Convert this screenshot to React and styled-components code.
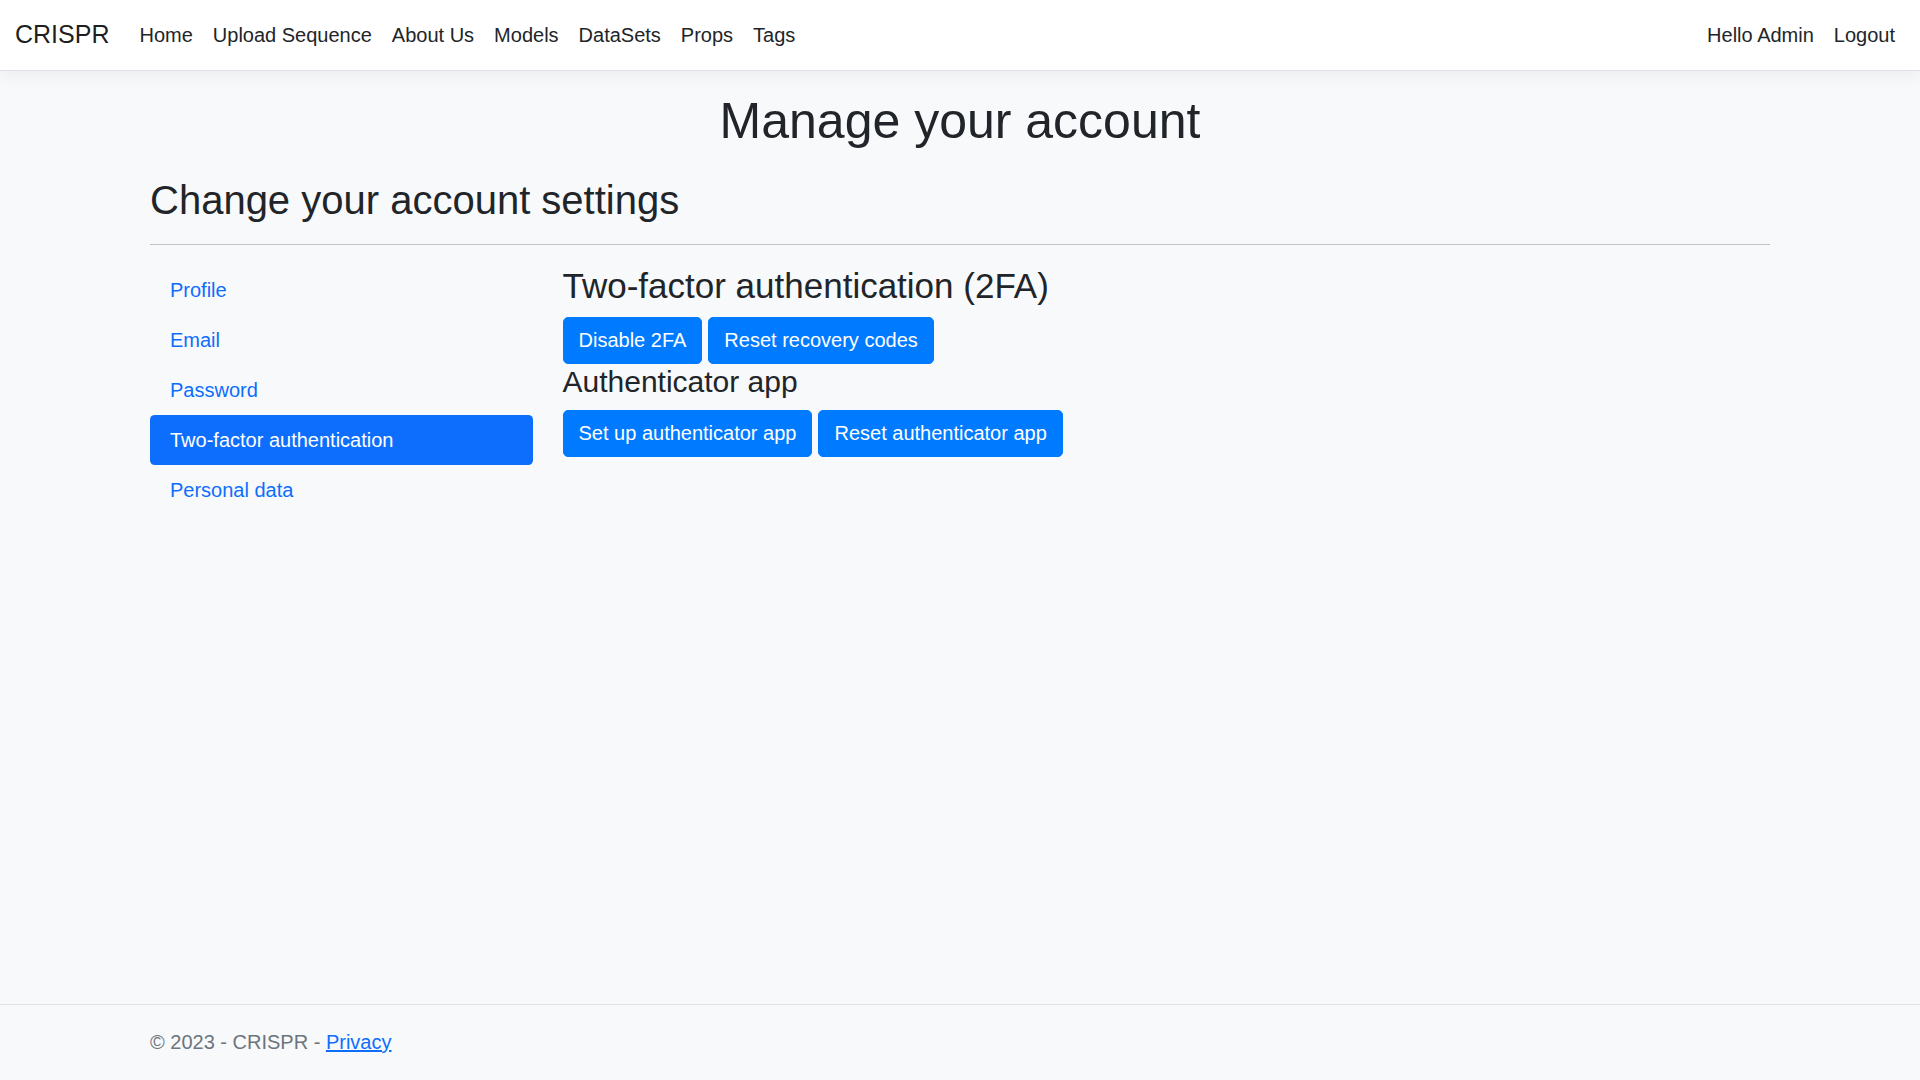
import React from 'react';
import styled, { createGlobalStyle } from 'styled-components';

const GlobalStyle = createGlobalStyle`
    *, *::before, *::after {
        box-sizing: border-box;
    }

    html, body {
        margin: 0;
        padding: 0;
    }

    body {
        font-family: "Liberation Sans", Arial, sans-serif;
        font-size: 20px;
        line-height: 1.5;
        color: #212529;
        background: #f8f9fa;
    }
`;

const Page = styled.div`
    min-height: 100vh;
    display: flex;
    flex-direction: column;
`;

const Navbar = styled.header`
    background: #fff;
    border-bottom: 1px solid #dee2e6;
    box-shadow: 0 5px 15px rgba(0, 0, 0, 0.05);
    margin-bottom: 20px;
`;

const NavInner = styled.nav`
    display: flex;
    align-items: center;
    padding: 10px 15px;
`;

const Brand = styled.a`
    font-size: 25px;
    line-height: 37.5px;
    padding: 6.25px 0;
    margin-right: 20px;
    color: rgba(0, 0, 0, 0.9);
    text-decoration: none;
    white-space: nowrap;
`;

const NavList = styled.ul`
    list-style: none;
    margin: 0;
    padding: 0;
    display: flex;
    flex-grow: ${(p) => (p.$grow ? 1 : 0)};
`;

const NavLink = styled.a`
    display: block;
    padding: 10px;
    line-height: 30px;
    color: #212529;
    text-decoration: none;
    white-space: nowrap;
`;

const Main = styled.main`
    flex: 1;
    width: 100%;
    max-width: 1650px;
    margin: 0 auto;
    padding: 0 15px 20px;
`;

const Title = styled.h1`
    font-size: 50px;
    font-weight: 500;
    line-height: 1.2;
    text-align: center;
    margin: 0 0 24.5px;
`;

const Subtitle = styled.h2`
    font-size: 40px;
    font-weight: 500;
    line-height: 1.2;
    margin: 0 0 10px;
`;

const Rule = styled.hr`
    margin: 20px 0;
    border: 0;
    border-top: 1px solid #212529;
    opacity: 0.25;
`;

const Row = styled.div`
    display: flex;
    margin: 0 -15px;
`;

const Col = styled.div`
    flex: 0 0 ${(p) => p.$span / 12 * 100}%;
    max-width: ${(p) => p.$span / 12 * 100}%;
    padding: 0 15px;
`;

const Pills = styled.ul`
    list-style: none;
    margin: 0;
    padding: 0;
    display: flex;
    flex-direction: column;
`;

const Pill = styled.a`
    display: block;
    padding: 10px 20px;
    line-height: 30px;
    border-radius: 4.6875px;
    text-decoration: none;
    color: ${(p) => (p.$active ? '#fff' : '#0d6efd')};
    background: ${(p) => (p.$active ? '#0d6efd' : 'transparent')};
`;

const SectionTitle = styled.h3`
    font-size: 35px;
    font-weight: 500;
    line-height: 1.2;
    margin: 0 0 10px;
`;

const SubSection = styled.h4`
    font-size: 30px;
    font-weight: 500;
    line-height: 1.2;
    margin: 0 0 10px;
`;

const ButtonRow = styled.div`
    display: flex;
    gap: 6px;
`;

const Button = styled.a`
    display: inline-block;
    padding: 7.5px 15px;
    line-height: 30px;
    font-size: 20px;
    color: #fff;
    background: #007bff;
    border: 1.25px solid #007bff;
    border-radius: 5px;
    text-decoration: none;
    white-space: nowrap;
`;

const Footer = styled.footer`
    border-top: 1px solid #dee2e6;
    color: #6c757d;
    line-height: 75px;
    white-space: nowrap;
`;

const FooterInner = styled.div`
    max-width: 1650px;
    margin: 0 auto;
    padding: 0 15px;

    a {
        color: #0d6efd;
        text-decoration: underline;
    }
`;

const mainLinks = ['Home', 'Upload Sequence', 'About Us', 'Models', 'DataSets', 'Props', 'Tags'];
const manageLinks = ['Profile', 'Email', 'Password', 'Two-factor authentication', 'Personal data'];

export default function App() {
    return (
        <Page>
            <GlobalStyle />
            <Navbar>
                <NavInner>
                    <Brand href="#">CRISPR</Brand>
                    <NavList $grow>
                        {mainLinks.map((link) => (
                            <li key={link}>
                                <NavLink href="#">{link}</NavLink>
                            </li>
                        ))}
                    </NavList>
                    <NavList>
                        <li><NavLink href="#">Hello Admin</NavLink></li>
                        <li><NavLink href="#">Logout</NavLink></li>
                    </NavList>
                </NavInner>
            </Navbar>

            <Main>
                <Title>Manage your account</Title>
                <Subtitle>Change your account settings</Subtitle>
                <Rule />
                <Row>
                    <Col $span={3}>
                        <Pills>
                            {manageLinks.map((link) => (
                                <li key={link}>
                                    <Pill href="#" $active={link === 'Two-factor authentication'}>{link}</Pill>
                                </li>
                            ))}
                        </Pills>
                    </Col>
                    <Col $span={9}>
                        <SectionTitle>Two-factor authentication (2FA)</SectionTitle>
                        <ButtonRow>
                            <Button href="#">Disable 2FA</Button>
                            <Button href="#">Reset recovery codes</Button>
                        </ButtonRow>
                        <SubSection>Authenticator app</SubSection>
                        <ButtonRow>
                            <Button href="#">Set up authenticator app</Button>
                            <Button href="#">Reset authenticator app</Button>
                        </ButtonRow>
                    </Col>
                </Row>
            </Main>

            <Footer>
                <FooterInner>
                    © 2023 - CRISPR - <a href="#">Privacy</a>
                </FooterInner>
            </Footer>
        </Page>
    );
}
